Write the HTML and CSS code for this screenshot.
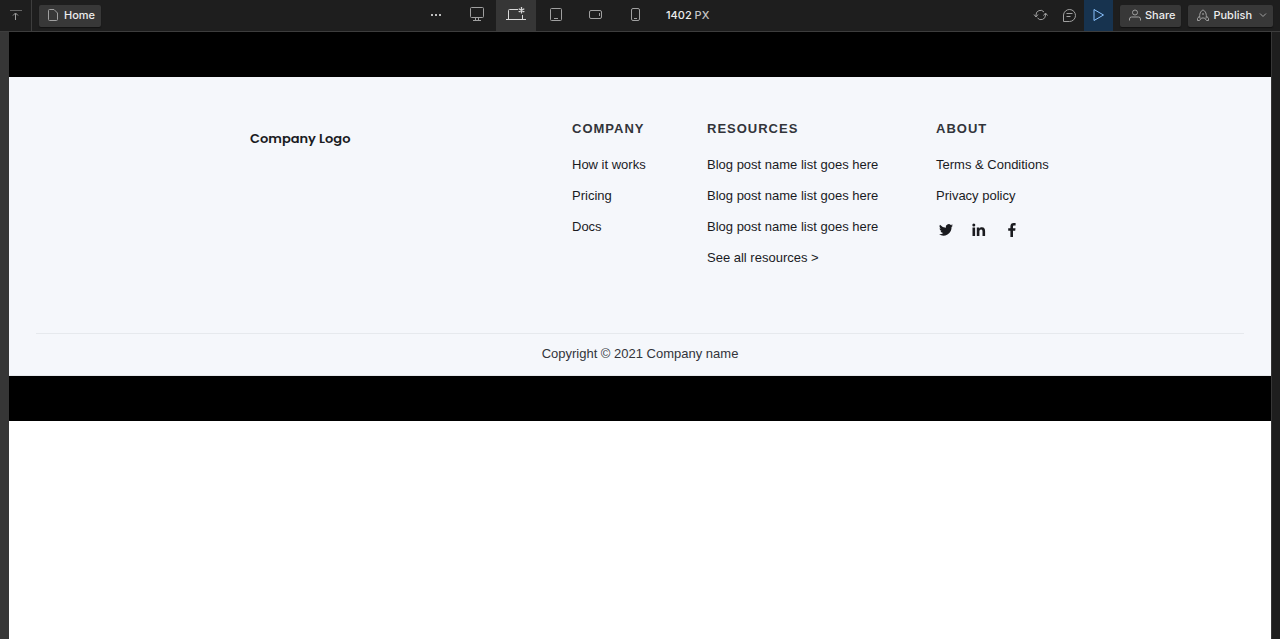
FILE: index.html
```html
<!DOCTYPE html>
<html lang="en">
<head>
<meta charset="utf-8">
<title>Home</title>
<link rel="stylesheet" href="styles.css">
</head>
<body class="editor">
<header class="toolbar">
  <div class="toolbar-left">
    <button class="collapse" aria-label="Collapse toolbar"><svg class="icon" width="16" height="16" viewBox="0 0 16 16"><path d="M2 3.500h12" stroke="#666"/><path d="M7.500 13V6.500M5 8.500 7.500 6 10 8.500"/></svg></button>
    <button class="pill"><svg class="icon icon-page" width="10" height="12" viewBox="0 0 10 12"><path d="M.5 1.500q0-1 1-1H6l3.500 3.500v6.500q0 1-1 1h-7q-1 0-1-1z"/></svg>Home</button>
  </div>
  <nav class="devices" aria-label="Breakpoints">
    <button class="device device-more" aria-label="More"><svg width="12" height="4" viewBox="0 0 12 4" fill="#bdbdbd"><path d="M1 1h2v2H1zM5 1h2v2H5zM9 1h2v2H9z"/></svg></button>
    <button class="device" aria-label="Large desktop"><svg class="icon" width="16" height="16" viewBox="0 0 16 16"><rect x="2.500" y="1.500" width="13" height="10" rx="1"/><path d="M7.500 12v2M10.500 12v2M5 14.500h8"/></svg></button>
    <button class="device device-active" aria-label="Base breakpoint"><svg class="icon icon-light" width="22" height="16" viewBox="0 0 22 16"><path d="M1 13.500h20"/><path d="M3.500 13V4.500q0-1 1-1H13M17.500 9v4"/><path d="M16.500 1v6.500M13.700 2.700l5.600 3.200M19.300 2.700l-5.600 3.200" stroke-width="1.300"/></svg></button>
    <button class="device" aria-label="Tablet"><svg class="icon" width="12" height="14" viewBox="0 0 12 14"><rect x=".5" y="1.500" width="11" height="12" rx="1"/><path d="M4 11.500h4"/></svg></button>
    <button class="device" aria-label="Mobile landscape"><svg class="icon" width="14" height="10" viewBox="0 0 14 10"><rect x=".5" y="1.500" width="12" height="8" rx="1.500"/><path d="M10.500 4v3"/></svg></button>
    <button class="device" aria-label="Mobile portrait"><svg class="icon" width="10" height="14" viewBox="0 0 10 14"><rect x=".5" y="1.500" width="8" height="12" rx="1.500"/><path d="M3 11.500h3"/></svg></button>
    <span class="canvas-size">1402 <span class="unit">PX</span></span>
  </nav>
  <div class="toolbar-right">
    <button class="action" aria-label="Sync"><svg class="icon" width="16" height="16" viewBox="0 0 16 16"><path d="M4 9.500V8a4.500 4.500 0 0 1 8-3M13.500 6.500V8a4.500 4.500 0 0 1-8 3M2 7.500l2 2.500 2-2.500M11.500 8.500l2-2.500 2 2.500"/></svg></button>
    <button class="action" aria-label="Comments"><svg class="icon" width="16" height="16" viewBox="0 0 16 16"><path d="M2.500 14.500V8a6 6 0 1 1 6 6.500zM5.500 6.500h6M5.500 9.500h4"/></svg></button>
    <button class="action action-preview" aria-label="Preview"><svg class="icon icon-blue" width="14" height="14" viewBox="0 0 14 14"><path d="M3 1.500v11L12.500 7z"/></svg></button>
    <button class="pill"><svg class="icon" width="12" height="12" viewBox="0 0 12 12"><circle cx="6" cy="3.500" r="2.500"/><path d="M.5 11.500V10q0-2 2-2h7q2 0 2 2v1.500"/></svg>Share</button>
    <button class="pill"><svg class="icon" width="12" height="12" viewBox="0 0 12 12"><path d="M3 9.500C2 5 3.500 2 6 1c2.500 1 4 4 3 8.500M2.500 7 .5 9.500v2h2L4.500 9h3l2 2.500h2v-2L9.500 7"/><circle cx="6" cy="5" r=".5"/></svg>Publish<svg class="icon icon-chevron" width="8" height="6" viewBox="0 0 8 6"><path d="m1 1.500 3 3 3-3"/></svg></button>
  </div>
</header>
<div class="workspace">
  <main class="canvas">
    <div class="band"></div>
    <footer class="footer">
      <div class="footer-grid">
        <a class="logo" href="#">Company Logo</a>
        <section class="column">
          <h2 class="heading">Company</h2>
          <ul class="links">
            <li><a href="#">How it works</a></li>
            <li><a href="#">Pricing</a></li>
            <li><a href="#">Docs</a></li>
          </ul>
        </section>
        <section class="column">
          <h2 class="heading">Resources</h2>
          <ul class="links">
            <li><a href="#">Blog post name list goes here</a></li>
            <li><a href="#">Blog post name list goes here</a></li>
            <li><a href="#">Blog post name list goes here</a></li>
            <li><a href="#">See all resources &gt;</a></li>
          </ul>
        </section>
        <section class="column">
          <h2 class="heading">About</h2>
          <ul class="links">
            <li><a href="#">Terms &amp; Conditions</a></li>
            <li><a href="#">Privacy policy</a></li>
            <li class="social">
              <a href="#" aria-label="Twitter"><svg width="16" height="16" viewBox="0 0 24 24"><path d="M22.500 5.200c-.8.300-1.600.6-2.500.7.900-.5 1.600-1.400 1.900-2.400-.8.500-1.800.9-2.700 1.100a4.300 4.300 0 0 0-7.400 3.900A12.200 12.200 0 0 1 3 4a4.300 4.300 0 0 0 1.300 5.700c-.7 0-1.400-.2-1.900-.5 0 2.100 1.400 3.900 3.400 4.300-.6.200-1.300.2-1.900.1.500 1.700 2.100 2.900 4 3A8.600 8.600 0 0 1 1.500 18.400 12.200 12.200 0 0 0 20.300 7.500c.9-.6 1.600-1.400 2.200-2.300z"/></svg></a>
              <a href="#" aria-label="LinkedIn"><svg width="16" height="16" viewBox="0 0 16 16"><circle cx="2.800" cy="2.900" r="1.500"/><path d="M1.500 5.500h2.600V14H1.500zM5.800 5.500h2.500v1.200c.5-.9 1.400-1.400 2.600-1.400 2.600 0 3.200 1.700 3.200 4V14h-2.600V9.900c0-1.200-.1-2.300-1.400-2.300S8.400 8.600 8.400 9.800V14H5.800z"/></svg></a>
              <a href="#" aria-label="Facebook"><svg width="16" height="16" viewBox="0 0 16 16"><path d="M6.400 15V8.800H4.200V6.300h2.200V4.400C6.400 2.200 7.700 1 9.700 1c.9 0 1.700.1 1.900.1v2.300h-1.300c-1 0-1.300.5-1.300 1.200v1.700h2.500l-.3 2.500H9V15z"/></svg></a>
            </li>
          </ul>
        </section>
      </div>
      <p class="copyright">Copyright © 2021 Company name</p>
    </footer>
    <div class="band"></div>
  </main>
</div>
</body>
</html>
```
FILE: styles.css
```css
* { box-sizing: border-box; }

.editor {
  margin: 0;
  min-height: 100vh;
  display: flex;
  flex-direction: column;
  background: #1e1e1e;
  font-family: "Liberation Sans", Arial, sans-serif;
  font-size: 13px;
}

button {
  margin: 0;
  padding: 0;
  border: 0;
  background: none;
  color: inherit;
  font: inherit;
}

a { color: inherit; text-decoration: none; }

.toolbar {
  display: grid;
  grid-template-columns: 32.5% auto 1fr;
  height: 32px;
  border-bottom: 1px solid #3d3d3d;
  background: #1e1e1e;
  color: #ededed;
  font: 500 11px Inter, sans-serif;
}

.toolbar-left,
.toolbar-right,
.devices {
  display: flex;
  align-items: center;
}

.toolbar-left { gap: 7px; }
.toolbar-right { justify-content: flex-end; padding-right: 7px; }

.collapse,
.device,
.action {
  display: flex;
  align-items: center;
  justify-content: center;
  align-self: stretch;
  padding-bottom: 2px;
}

.collapse { width: 32px; border-right: 1px solid #3d3d3d; }
.device { width: 40px; padding-bottom: 4px; }
.device-more { padding-bottom: 2px; }
.device-active { background: #363636; }
.action { width: 29px; }
.action-preview { background: #17334f; }

.icon { fill: none; stroke: #a0a0a0; }
.icon-page { margin-right: 2px; }
.icon-light { stroke: #d9d9d9; }
.icon-blue { stroke: #8ac2ff; }
.icon-chevron { margin-left: 3px; }

.canvas-size { padding: 0 0 2px 10px; }
.unit { color: #c4c4c4; }

.pill {
  display: flex;
  align-items: center;
  gap: 4px;
  height: 22px;
  padding: 0 6px 2px 9px;
  border-radius: 2px;
  background: #383838;
  box-shadow: 0 1px 1px #111;
}

.toolbar-right .pill { margin-left: 7px; }

.workspace {
  flex: 1;
  display: flex;
  padding-right: 8px;
  border-left: 9px solid #363636;
}

.canvas {
  flex: 1;
  border-right: 1px solid #363636;
  background: #fff;
}

.band { height: 45px; background: #000; }

.footer {
  padding: 42px 27px 11px;
  border-bottom: 1px solid #e6e9ed;
  background: #f5f7fb;
  color: #1a1b1f;
}

.footer-grid {
  display: grid;
  grid-template-columns: 1fr 135px 229px 113px;
  max-width: 818px;
  margin: 0 auto;
  padding-bottom: 65px;
}

.logo {
  padding: 10px 19px;
  font: 600 13px/20px Poppins, Inter, sans-serif;
}

.heading {
  margin: 0 0 16px;
  color: #32343a;
  font-size: 13px;
  line-height: 20px;
  letter-spacing: 1px;
  text-transform: uppercase;
}

.links {
  display: grid;
  gap: 11px;
  margin: 0;
  padding: 0;
  list-style: none;
  line-height: 20px;
}

.social { display: flex; gap: 13px; }

.social a {
  display: flex;
  align-items: center;
  justify-content: center;
  width: 20px;
  height: 26px;
  fill: #1a1b1f;
}

.copyright {
  margin: 0;
  padding-top: 10px;
  border-top: 1px solid #e6e9ed;
  color: #32343a;
  line-height: 20px;
  text-align: center;
}
```
